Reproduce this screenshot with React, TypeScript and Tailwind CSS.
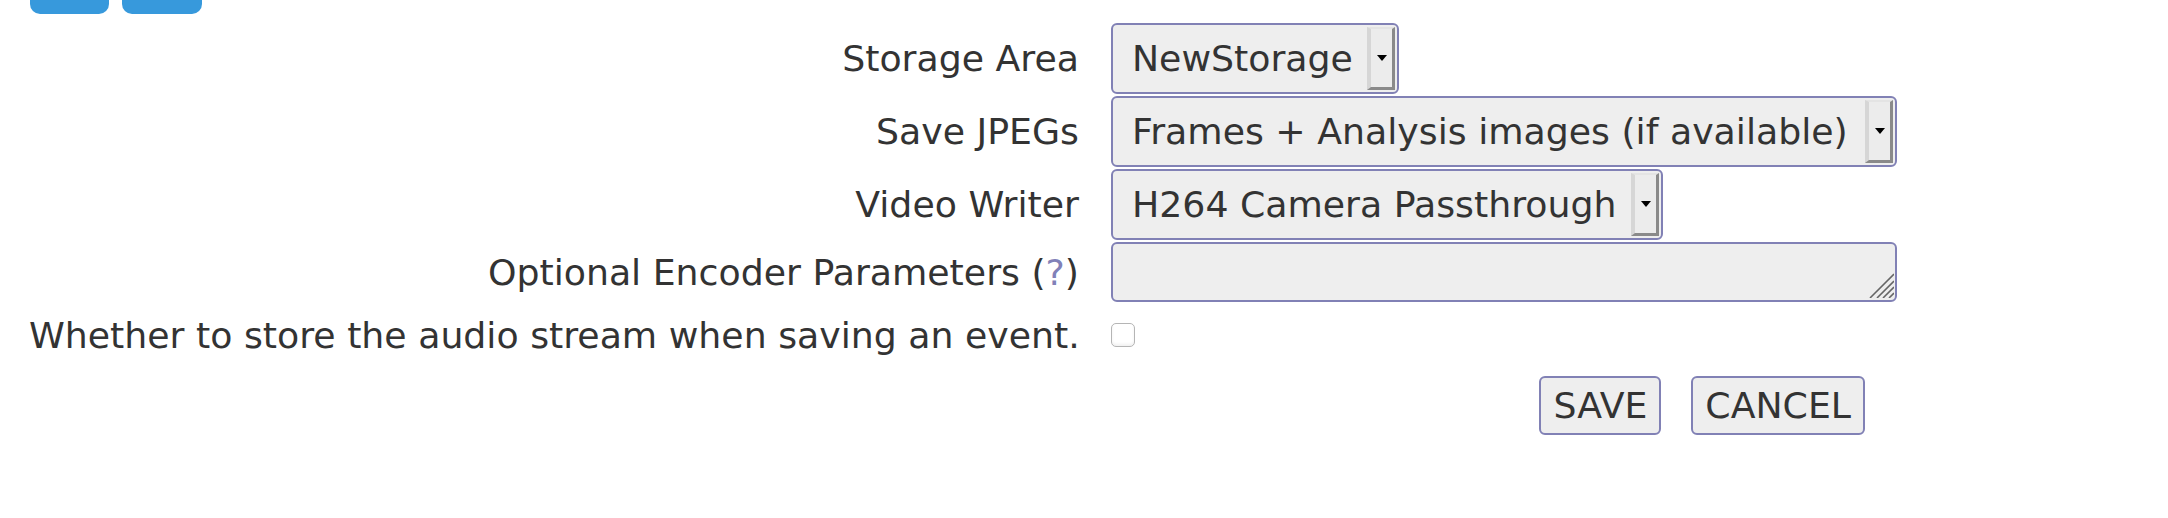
import type { ReactNode } from "react";

function Arrow() {
  return (
    <svg width="10" height="6" viewBox="0 0 10 6">
      <polygon points="0,0 10,0 5,6" fill="#000" />
    </svg>
  );
}

function Select({ value, width }: { value: string; width: string }) {
  return (
    <div
      className={`flex h-[71px] ${width} items-stretch rounded-[6px] border-2 border-[#8181b5] bg-[#eeeeee] py-[2px] pr-[2px]`}
    >
      <span className="flex flex-1 items-center whitespace-nowrap pl-[19px] pt-[2px]">{value}</span>
      <span className="flex w-[28px] items-center justify-center border-t-[2px] border-r-[3px] border-b-[3px] border-l-[4px] border-t-[#e4e4e4] border-r-[#8a8a8a] border-b-[#8a8a8a] border-l-[#d6d6d6] bg-[#ececec]">
        <Arrow />
      </span>
    </div>
  );
}

function Row({ label, children, className = "" }: { label: ReactNode; children: ReactNode; className?: string }) {
  return (
    <div className={`flex items-center gap-x-[32px] ${className}`}>
      <div className="w-[1050px] shrink-0 whitespace-nowrap pt-[2px] text-right">{label}</div>
      {children}
    </div>
  );
}

export default function App() {
  return (
    <div className="min-h-screen bg-white font-['DejaVu_Sans','Verdana',sans-serif] text-[36.25px] text-[#333333]">
      <div className="flex gap-[13px] pl-[30px]">
        <div className="-mt-[46px] h-[60px] w-[79px] rounded-[10px] bg-[#3799dc]" />
        <div className="-mt-[46px] h-[60px] w-[80px] rounded-[10px] bg-[#3799dc]" />
      </div>

      <div className="mt-[9px] flex flex-col pl-[29px]">
        <Row label="Storage Area">
          <Select value="NewStorage" width="w-[288px]" />
        </Row>
        <Row label="Save JPEGs" className="mt-[2px]">
          <Select value="Frames + Analysis images (if available)" width="w-[786px]" />
        </Row>
        <Row label="Video Writer" className="mt-[2px]">
          <Select value="H264 Camera Passthrough" width="w-[552px]" />
        </Row>
        <Row
          label={
            <>
              Optional Encoder Parameters (<span className="text-[#8181b8]">?</span>)
            </>
          }
          className="mt-[2px]"
        >
          <div className="relative h-[60px] w-[786px] rounded-[6px] border-2 border-[#8181b5] bg-[#eeeeee]">
            <textarea className="block h-full w-full resize-none bg-transparent px-2 text-[36px] outline-none" />
            <svg
              className="absolute bottom-[2px] right-[1px]"
              width="26"
              height="26"
              viewBox="0 0 26 26"
              stroke="#666"
              strokeWidth="1.6"
            >
              <line x1="2" y1="26" x2="26" y2="2" />
              <line x1="9" y1="26" x2="26" y2="9" />
              <line x1="15" y1="26" x2="26" y2="15" />
              <line x1="21" y1="26" x2="26" y2="21" />
            </svg>
          </div>
        </Row>
        <Row label="Whether to store the audio stream when saving an event." className="mt-[5px]">
          <input
            type="checkbox"
            className="size-[24px] appearance-none rounded-[5px] border-[1.5px] border-[#b5b5b5] bg-white shadow-[inset_0_-2px_3px_rgba(0,0,0,0.06)]"
          />
        </Row>
        <Row label="" className="mt-[13px]">
          <div className="flex w-[786px] justify-end gap-[30px] pr-[32px]">
            <button className="h-[59px] rounded-[6px] border-2 border-[#8181b5] bg-[#eeeeee] px-[12px] leading-none text-[#333333]">
              SAVE
            </button>
            <button className="h-[59px] rounded-[6px] border-2 border-[#8181b5] bg-[#eeeeee] px-[12px] leading-none text-[#333333]">
              CANCEL
            </button>
          </div>
        </Row>
      </div>
    </div>
  );
}
